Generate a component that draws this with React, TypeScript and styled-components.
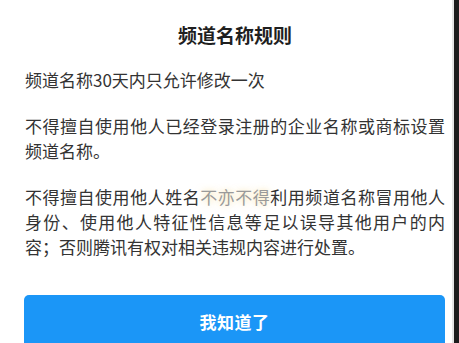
import styled, { createGlobalStyle } from "styled-components";

const GlobalStyle = createGlobalStyle`
  html, body {
    margin: 0;
    padding: 0;
    background: #1c1c1c;
  }
  * {
    box-sizing: border-box;
  }
`;

const rules = [
  { id: 1, text: "频道名称30天内只允许修改一次" },
  {
    id: 2,
    text: "不得擅自使用他人已经登录注册的企业名称或商标设置频道名称。",
  },
];

const App = () => {
  return (
    <>
      <GlobalStyle />
      <Page>
        <Sheet>
          <Title>频道名称规则</Title>
          {rules.map((item) => (
            <Rule key={item.id}>{item.text}</Rule>
          ))}
          <Rule>
            不得擅自使用他人姓名<Faded>不亦不得</Faded>
            利用频道名称冒用他人身份、使用他人特征性信息等足以误导其他用户的内容；否则腾讯有权对相关违规内容进行处置。
          </Rule>
          <ConfirmButton type="button">我知道了</ConfirmButton>
        </Sheet>
      </Page>
    </>
  );
};

const Page = styled.div`
  width: 459px;
  height: 343px;
  display: flex;
  overflow: hidden;
  background: #1c1c1c;
  font-family: "Noto Sans CJK SC", "Noto Sans", sans-serif;
`;

const Sheet = styled.section`
  width: 454px;
  flex: none;
  display: flex;
  flex-direction: column;
  padding: 22px 9px 0 25px;
  background: #fff;
  border-right: 2px solid #e4e4e4;
`;

const Title = styled.h2`
  margin: 0 0 20px;
  width: 420px;
  font-size: 19px;
  line-height: 25px;
  font-weight: 700;
  color: #1f1f1f;
  text-align: center;
`;

const Rule = styled.p`
  margin: 0 0 21px;
  width: 420px;
  font-size: 17px;
  line-height: 25px;
  color: #333;
  text-align: justify;
  &:last-of-type {
    margin-bottom: 36px;
  }
`;

const Faded = styled.span`
  color: #9a9a9a;
  text-shadow: 0 0 6px rgba(245, 200, 90, 0.55);
`;

const ConfirmButton = styled.button`
  width: 421px;
  height: 52px;
  margin-left: -1px;
  flex: none;
  border: none;
  border-radius: 5px;
  background: #1b96f7;
  color: #fff;
  font-family: inherit;
  font-size: 17px;
  font-weight: 700;
  letter-spacing: 0.5px;
  cursor: pointer;
`;

export default App;
